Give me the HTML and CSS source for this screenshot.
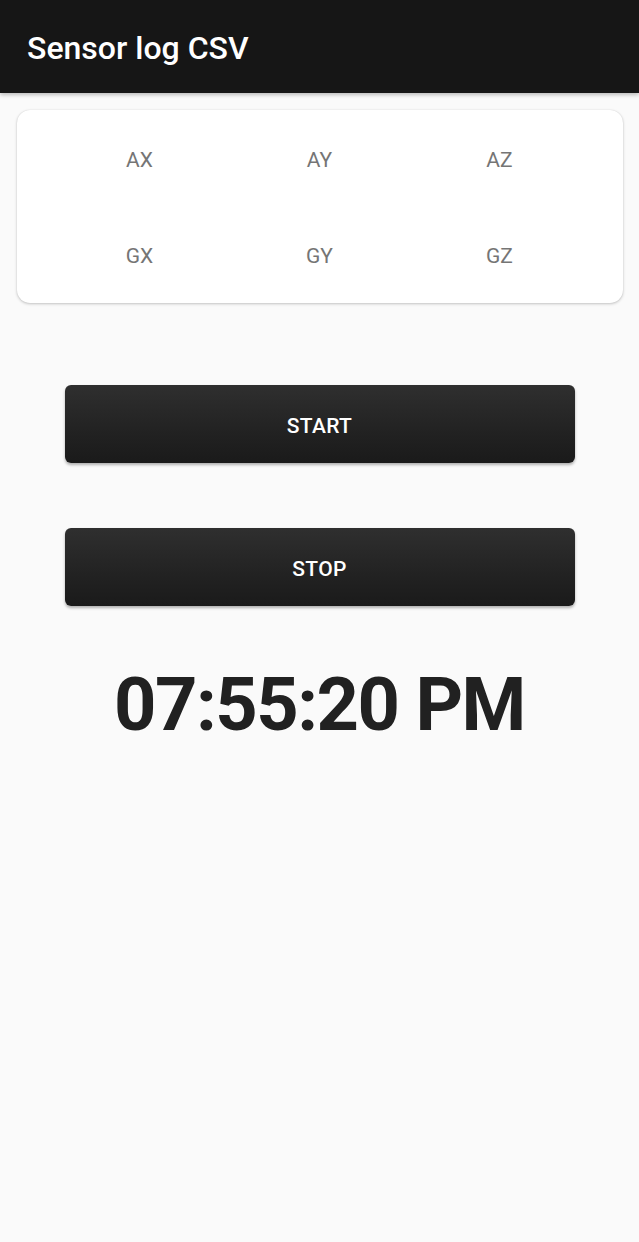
FILE: index.html
```html
<!DOCTYPE html>
<html>
<head>
<meta charset="utf-8">
<link rel="stylesheet" href="styles.css">
</head>
<body>
<header class="appbar"><h1 class="title">Sensor log CSV</h1></header>
<main class="content">
  <section class="card">
    <div class="cell">AX</div>
    <div class="cell">AY</div>
    <div class="cell">AZ</div>
    <div class="cell">GX</div>
    <div class="cell">GY</div>
    <div class="cell">GZ</div>
  </section>
  <div class="buttons">
    <button class="btn">START</button>
    <button class="btn">STOP</button>
  </div>
  <div class="clock">07:55:20 PM</div>
</main>
</body>
</html>
```
FILE: styles.css
```css
html, body {
  margin: 0;
  padding: 0;
  background: #fafafa;
  font-family: Roboto, "Noto Sans", sans-serif;
}
body {
  width: 639px;
  height: 1242px;
  overflow: hidden;
}
.appbar {
  height: 93px;
  background: #161616;
  display: flex;
  align-items: center;
  padding-left: 27px;
  box-shadow: 0 2px 4px rgba(0,0,0,0.25);
  position: relative;
  z-index: 1;
}
.title {
  margin: 0;
  color: #ffffff;
  font-size: 32px;
  font-weight: 500;
  padding-top: 3px;
}
.content {
  display: flex;
  flex-direction: column;
  align-items: center;
  padding-top: 17px;
}
.card {
  width: 540px;
  height: 193px;
  padding: 0 33px;
  box-sizing: content-box;
  background: #fff;
  border-radius: 13px;
  box-shadow: 0 1px 3px rgba(0,0,0,0.22), 0 0 1px rgba(0,0,0,0.15);
  display: grid;
  grid-template-columns: repeat(3, 1fr);
  grid-template-rows: 98px 95px;
  align-items: center;
}
.cell {
  text-align: center;
  color: #757575;
  font-size: 21px;
  line-height: 1;
  padding-top: 2px;
}
.buttons {
  display: flex;
  flex-direction: column;
  gap: 65px;
  margin-top: 82px;
}
.btn {
  width: 510px;
  height: 78px;
  border: none;
  border-radius: 6px;
  background: linear-gradient(180deg, #2f2f2f 0%, #222 60%, #1a1a1a 100%);
  box-shadow: 0 2px 3px rgba(0,0,0,0.3);
  color: #fff;
  font-family: Roboto, sans-serif;
  font-size: 21px;
  font-weight: 500;
  letter-spacing: 0.3px;
  padding: 3px 0 0;
}
.clock {
  margin-top: 62px;
  font-size: 74px;
  font-weight: 700;
  letter-spacing: -1.5px;
  color: #212121;
  line-height: 1;
}
```
